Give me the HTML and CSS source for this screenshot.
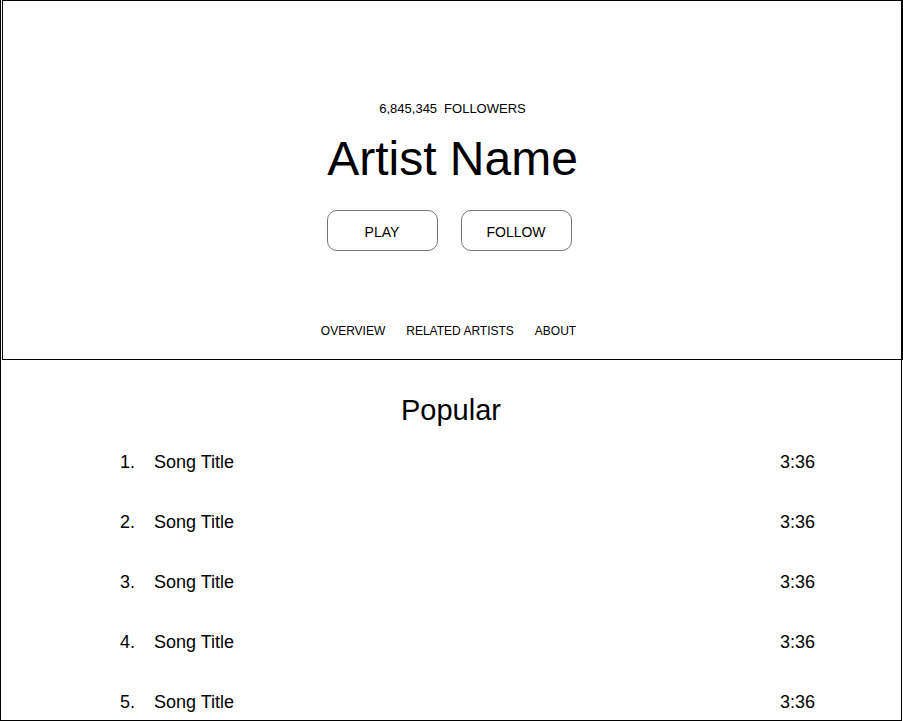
FILE: index.html
```html
<!DOCTYPE html>
<html lang="en">
<head>
<meta charset="utf-8">
<title>Artist</title>
<link rel="stylesheet" href="styles.css">
</head>
<body>
<div class="page">
  <header class="hero">
    <p class="followers"><span class="count">6,845,345</span><span>FOLLOWERS</span></p>
    <h1 class="artist">Artist Name</h1>
    <div class="actions">
      <button class="btn">PLAY</button>
      <button class="btn">FOLLOW</button>
    </div>
    <nav class="tabs">
      <a class="tab">OVERVIEW</a>
      <a class="tab">RELATED ARTISTS</a>
      <a class="tab">ABOUT</a>
    </nav>
  </header>
  <section class="popular">
    <h2 class="popular-title">Popular</h2>
    <ol class="songs">
      <li class="song"><span class="num">1.</span><span class="title">Song Title</span><span class="dur">3:36</span></li>
      <li class="song"><span class="num">2.</span><span class="title">Song Title</span><span class="dur">3:36</span></li>
      <li class="song"><span class="num">3.</span><span class="title">Song Title</span><span class="dur">3:36</span></li>
      <li class="song"><span class="num">4.</span><span class="title">Song Title</span><span class="dur">3:36</span></li>
      <li class="song"><span class="num">5.</span><span class="title">Song Title</span><span class="dur">3:36</span></li>
    </ol>
  </section>
</div>
</body>
</html>
```
FILE: styles.css
```css
html, body {
  margin: 0;
  padding: 0;
  background: #fff;
  overflow: hidden;
}
body {
  font-family: "Liberation Sans", Arial, Helvetica, sans-serif;
  color: #000;
}
.page {
  box-sizing: border-box;
  width: 902px;
  height: 721px;
  border: 1px solid #000;
  border-top: 0;
}
.hero {
  box-sizing: border-box;
  width: 901px;
  height: 360px;
  margin-left: 1px;
  border: 1px solid #000;
  padding-top: 100px;
  display: flex;
  flex-direction: column;
  align-items: center;
}
.followers {
  margin: 0;
  font-size: 13px;
  line-height: 16px;
  display: flex;
  gap: 7px;
}
.artist {
  margin: 14px 0 0;
  font-size: 48px;
  font-weight: normal;
  line-height: 56px;
}
.actions {
  margin: 23px 7px 0 0;
  display: flex;
  gap: 23px;
}
.btn {
  box-sizing: border-box;
  width: 111px;
  height: 41px;
  border: 1px solid #777;
  border-radius: 10px;
  background: #fff;
  font-family: inherit;
  font-size: 14px;
  color: #000;
  padding: 2px 0 0;
}
.tabs {
  margin: 73px 8px 0 0;
  display: flex;
  gap: 21px;
  font-size: 12px;
  line-height: 14px;
}
.popular {
  padding-top: 33px;
}
.popular-title {
  margin: 0;
  text-align: center;
  font-size: 29px;
  font-weight: normal;
  line-height: 34px;
}
.songs {
  list-style: none;
  margin: 5px 0 0;
  padding: 0 86px 0 119px;
}
.song {
  display: flex;
  font-size: 18px;
  line-height: 20px;
  padding: 20px 0;
}
.num {
  width: 34px;
}
.title {
  flex: 1;
}
.dur {
  text-align: right;
}
```
